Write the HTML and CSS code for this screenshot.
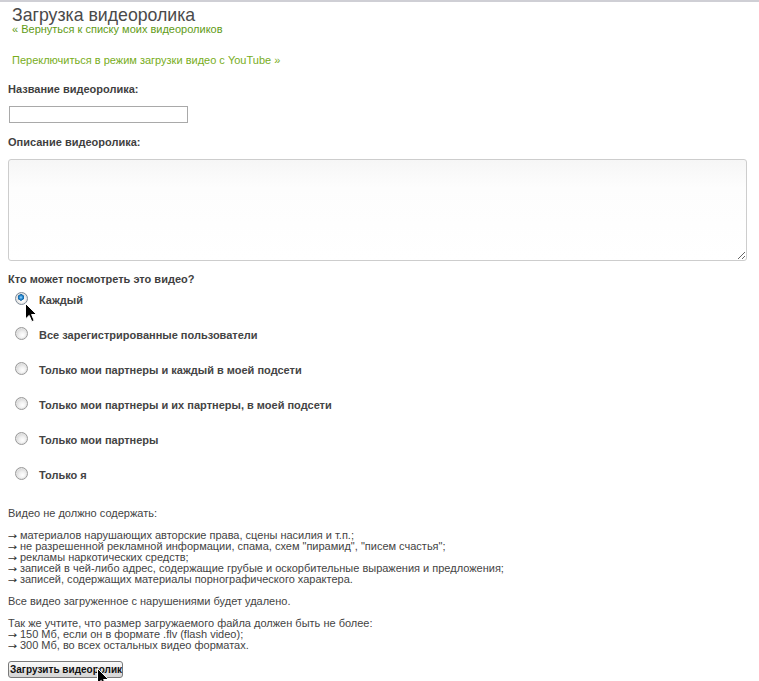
FILE: index.html
```html
<!DOCTYPE html>
<html lang="ru">
<head>
<meta charset="utf-8">
<title>Загрузка видеоролика</title>
<link rel="stylesheet" href="styles.css">
</head>
<body>
<div class="topbar"></div>
<div class="page">
  <h1 class="title">Загрузка видеоролика</h1>
  <a class="link link-back" href="#">« Вернуться к списку моих видеороликов</a>
  <a class="link link-switch" href="#">Переключиться в режим загрузки видео с YouTube »</a>

  <form class="upload-form">
    <label class="field-label label-name" for="name">Название видеоролика:</label>
    <input class="text-input" id="name" type="text">

    <label class="field-label label-desc" for="desc">Описание видеоролика:</label>
    <textarea class="text-area" id="desc"></textarea>

    <div class="field-label label-access">Кто может посмотреть это видео?</div>
    <ul class="options">
      <li class="option"><input class="radio" type="radio" name="access" checked><span class="option-text">Каждый</span></li>
      <li class="option"><input class="radio" type="radio" name="access"><span class="option-text">Все зарегистрированные пользователи</span></li>
      <li class="option"><input class="radio" type="radio" name="access"><span class="option-text">Только мои партнеры и каждый в моей подсети</span></li>
      <li class="option"><input class="radio" type="radio" name="access"><span class="option-text">Только мои партнеры и их партнеры, в моей подсети</span></li>
      <li class="option"><input class="radio" type="radio" name="access"><span class="option-text">Только мои партнеры</span></li>
      <li class="option"><input class="radio" type="radio" name="access"><span class="option-text">Только я</span></li>
    </ul>

    <div class="rules">
      Видео не должно содержать:<br>
      <br>
      <span class="arrow">→</span> материалов нарушающих авторские права, сцены насилия и т.п.;<br>
      <span class="arrow">→</span> не разрешенной рекламной информации, спама, схем "пирамид", "писем счастья";<br>
      <span class="arrow">→</span> рекламы наркотических средств;<br>
      <span class="arrow">→</span> записей в чей-либо адрес, содержащие грубые и оскорбительные выражения и предложения;<br>
      <span class="arrow">→</span> записей, содержащих материалы порнографического характера.<br>
      <br>
      Все видео загруженное с нарушениями будет удалено.<br>
      <br>
      Так же учтите, что размер загружаемого файла должен быть не более:<br>
      <span class="arrow">→</span> 150 Мб, если он в формате .flv (flash video);<br>
      <span class="arrow">→</span> 300 Мб, во всех остальных видео форматах.
    </div>

    <button class="submit" type="button">Загрузить видеоролик</button>
  </form>
</div>

<svg class="cursor cursor-radio" width="13" height="20" viewBox="0 0 13 20"><path d="M0.5 0.5 L0.5 16 L4.2 12.4 L6.8 18.6 L9.2 17.6 L6.6 11.5 L11.6 11.5 Z" fill="#000" stroke="#fff" stroke-width="1"/></svg>
<svg class="cursor cursor-button" width="13" height="20" viewBox="0 0 13 20"><path d="M0.5 0.5 L0.5 16 L4.2 12.4 L6.8 18.6 L9.2 17.6 L6.6 11.5 L11.6 11.5 Z" fill="#000" stroke="#fff" stroke-width="1"/></svg>
</body>
</html>
```
FILE: styles.css
```css
html, body {
  margin: 0;
  padding: 0;
  background: #fff;
}

body {
  font-family: "Liberation Sans", Arial, sans-serif;
  font-size: 11px;
  color: #444;
  position: relative;
  min-height: 681px;
}

.topbar {
  height: 2px;
  background: #cfcfd5;
}

.page {
  padding: 0 8px;
}

.title {
  margin: 5px 0 0 4px;
  font-size: 17.7px;
  font-weight: normal;
  line-height: 16px;
  color: #4a4a4a;
}

.link {
  display: block;
  margin-left: 4px;
  text-decoration: none;
  font-size: 11px;
}

.link-back {
  margin-top: 1px;
  line-height: 11px;
  color: #5f9b16;
}

.link-switch {
  margin-top: 19px;
  line-height: 13px;
  color: #78ad1b;
}

.upload-form {
  display: flex;
  flex-direction: column;
  align-items: flex-start;
}

.field-label {
  display: block;
  font-weight: bold;
  font-size: 11px;
  line-height: 13px;
  color: #3f3f3f;
}

.label-name { margin-top: 16px; }
.label-desc { margin-top: 13px; }
.label-access { margin-top: 12px; }

.text-input {
  box-sizing: border-box;
  margin: 10px 0 0 1px;
  width: 179px;
  height: 17px;
  padding: 0 2px;
  border: 1px solid #a9a9a9;
  background: #fff;
  font: 11px "Liberation Sans", Arial, sans-serif;
}

.text-area {
  box-sizing: border-box;
  margin-top: 10px;
  width: 739px;
  height: 102px;
  padding: 2px;
  border: 1px solid #cdcdcd;
  border-radius: 3px;
  background: linear-gradient(#f6f6f6, #fdfdfd 28px, #fff);
  resize: both;
  font: 11px "Liberation Sans", Arial, sans-serif;
}

.options {
  list-style: none;
  margin: 0;
  padding: 0;
}

.option {
  display: flex;
  align-items: flex-start;
  height: 35px;
}

.radio {
  appearance: none;
  -webkit-appearance: none;
  box-sizing: border-box;
  width: 13px;
  height: 13px;
  margin: 6px 11px 0 7px;
  border-radius: 50%;
  border: 1px solid #9a9a9a;
  background: radial-gradient(circle at 60% 65%, #ffffff 0%, #f0f0f0 35%, #cfcfcf 80%, #bdbdbd 100%);
  box-shadow: inset 0 0 0 1px #e6e6e6;
}

.radio:checked {
  border-color: #7d8a97;
  background:
    radial-gradient(circle at 45% 40%, #9fd7ff 0, #2c8fd6 18%, #10609e 34%, rgba(16,96,158,0) 38%),
    radial-gradient(circle at 60% 65%, #ffffff 0%, #eeeeee 45%, #c8c8c8 85%, #b5b5b5 100%);
}

.option-text {
  padding-top: 8px;
  font-weight: bold;
  font-size: 11px;
  line-height: 13px;
  color: #444;
}

.rules {
  margin-top: 12px;
  font-size: 11px;
  line-height: 11px;
  color: #444;
}

.arrow {
  display: inline-block;
  font-family: "DejaVu Sans", sans-serif;
  font-size: 9.4px;
  line-height: 9px;
  color: #333;
  transform: scaleX(1.2);
  transform-origin: left center;
  margin-right: 1px;
}

.submit {
  box-sizing: border-box;
  margin-top: 10px;
  width: 115px;
  height: 17px;
  padding: 0 1px;
  border: 1px solid #7a7a7a;
  border-radius: 3px;
  background: linear-gradient(#f9f9f9, #eeeeee 50%, #e0e0e0 51%, #d6d6d6);
  font: bold 10px "Liberation Sans", Arial, sans-serif;
  color: #111;
  line-height: 13px;
  text-align: center;
  white-space: nowrap;
}

.cursor {
  position: absolute;
  pointer-events: none;
}

.cursor-radio {
  left: 25px;
  top: 303px;
}

.cursor-button {
  left: 97px;
  top: 668px;
}
```
